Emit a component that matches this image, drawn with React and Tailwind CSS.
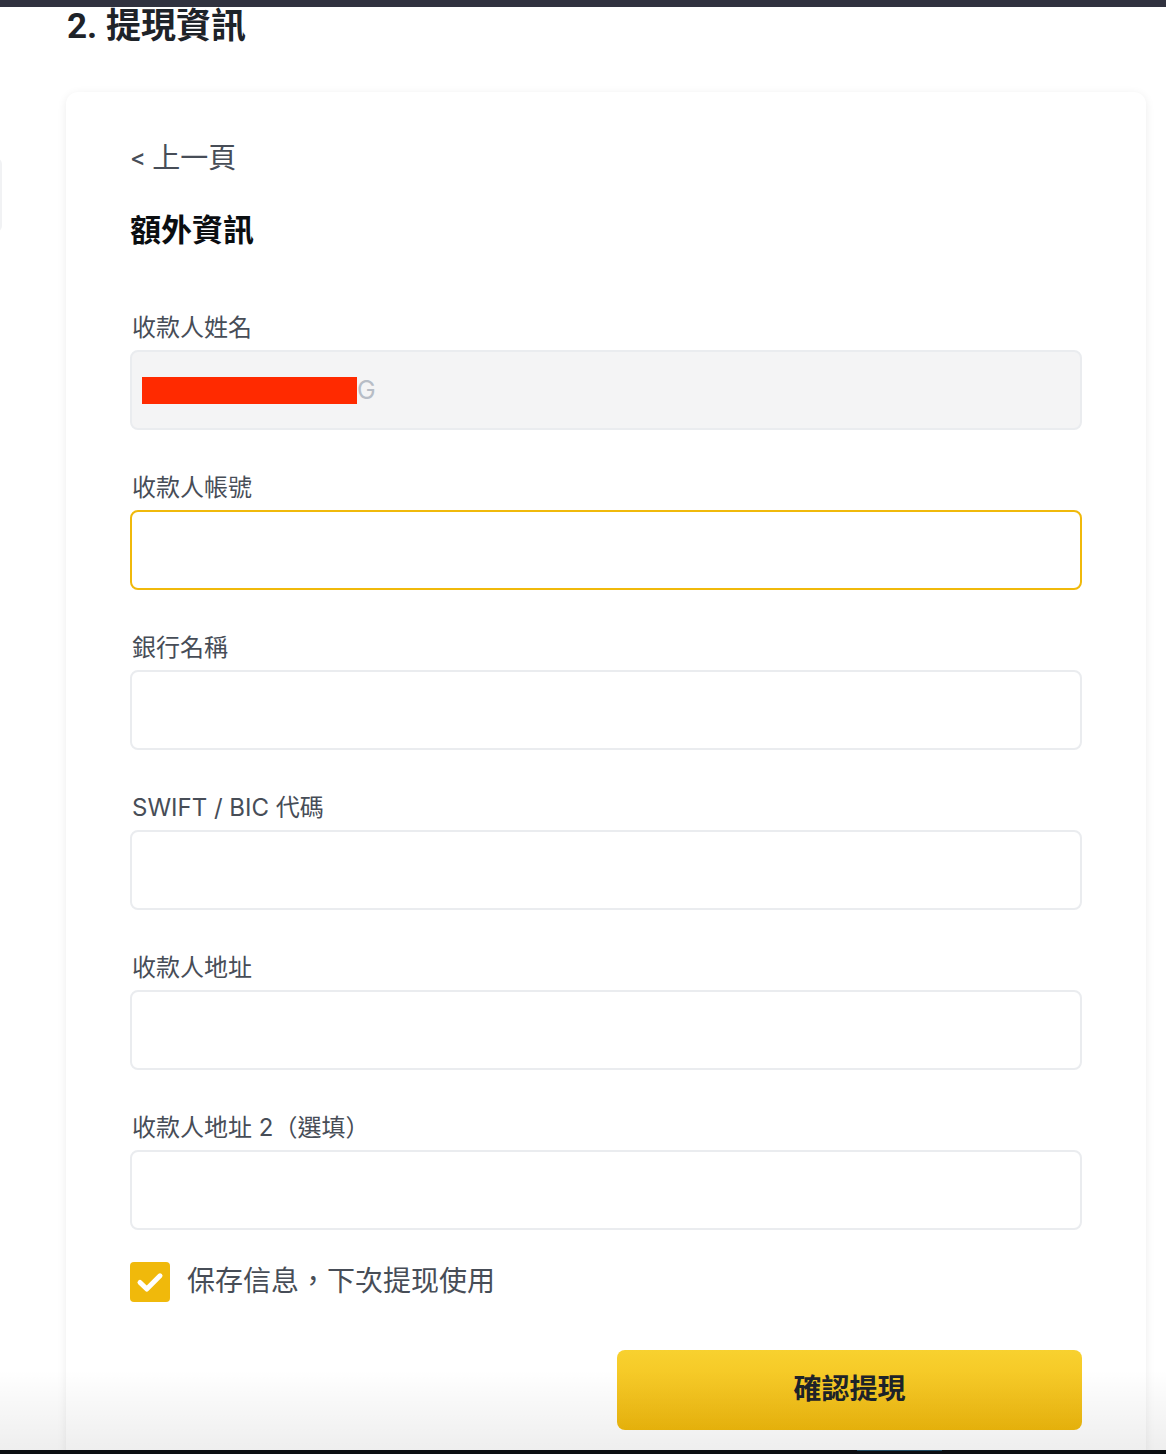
import React from "react";

const font = { fontFamily: '"Roboto", "Noto Sans CJK TC", "Noto Sans CJK SC", sans-serif' };
const labelFont = { fontFamily: '"Inter", "Noto Sans CJK TC", "Noto Sans CJK SC", sans-serif' };

function Field({ label, children, first }) {
  return (
    <div className={first ? "" : "mt-[41px]"}>
      <div className="ml-[2px] text-[24px] leading-[34px] text-[#474d57] mb-[5px]" style={labelFont}>{label}</div>
      {children}
    </div>
  );
}

function Input({ focused }) {
  return (
    <div
      className={
        "h-[80px] w-full rounded-[8px] border-2 bg-white " +
        (focused ? "border-[#f0b90b]" : "border-[#eaecef]")
      }
    />
  );
}

export default function App() {
  return (
    <div className="relative h-[1454px] w-[1166px] overflow-hidden bg-white" style={font}>
      <div className="h-[7px] w-full bg-[#30323f]" />
      <div className="absolute left-[-60px] top-[158px] h-[74px] w-[62px] rounded-[6px] border-2 border-[#f1f2f4]" />
      <div className="pl-[67px] pt-[2px]">
        <h1 className="text-[35px] leading-[36px] font-bold text-[#1e2329]">2. 提現資訊</h1>
      </div>
      <div className="ml-[66px] mt-[47px] w-[1080px] rounded-[12px] bg-white px-[64px] pt-[49px] pb-[80px] shadow-[0_2px_10px_rgba(0,0,0,0.08)]">
        <div className="text-[28px] leading-[36px] text-[#474d57] pl-[1px]">&lt; 上一頁</div>
        <div className="mt-[34px] text-[31px] leading-[40px] font-bold text-[#0b0e11]">額外資訊</div>
        <div className="mt-[60px]">
          <Field label="收款人姓名" first>
            <div className="flex h-[80px] w-full items-center rounded-[8px] border-2 border-[#eaecef] bg-[#f4f4f5] pl-[10px]">
              <div className="h-[27px] w-[215px] bg-[#ff2a00]" />
              <span className="text-[25px] leading-none text-[#b7bdc6]" style={labelFont}>G</span>
            </div>
          </Field>
          <Field label="收款人帳號">
            <Input focused />
          </Field>
          <Field label="銀行名稱">
            <Input />
          </Field>
          <Field label="SWIFT / BIC 代碼">
            <Input />
          </Field>
          <Field label="收款人地址">
            <Input />
          </Field>
          <Field label="收款人地址 2（選填）">
            <Input />
          </Field>
        </div>
        <div className="mt-[32px] flex h-[40px] items-center gap-[17px]">
          <div className="h-[40px] w-[40px] rounded-[4px] bg-[#f0b90b]">
            <svg width="40" height="40" viewBox="0 0 40 40" fill="none">
              <path d="M10 20.5l6.8 6.5L30 13.8" stroke="white" strokeWidth="5" strokeLinecap="round" strokeLinejoin="round" />
            </svg>
          </div>
          <span className="text-[28px] leading-[40px] text-[#474d57]">保存信息，下次提现使用</span>
        </div>
        <div className="mt-[48px] flex justify-end">
          <button className="flex h-[80px] w-[465px] items-center justify-center rounded-[8px] bg-gradient-to-b from-[#f8d12f] to-[#f0b90b] text-[28px] font-bold text-[#1e2329]">
            確認提現
          </button>
        </div>
      </div>
      <div className="pointer-events-none absolute bottom-[4px] left-0 h-[80px] w-full bg-gradient-to-b from-transparent to-[rgba(0,0,0,0.065)]" />
      <div className="absolute bottom-0 left-0 h-[4px] w-full bg-[#0b0e11]">
        <div className="absolute left-[857px] top-0 h-[1px] w-[85px] bg-[#1f4a60]" />
      </div>
    </div>
  );
}
